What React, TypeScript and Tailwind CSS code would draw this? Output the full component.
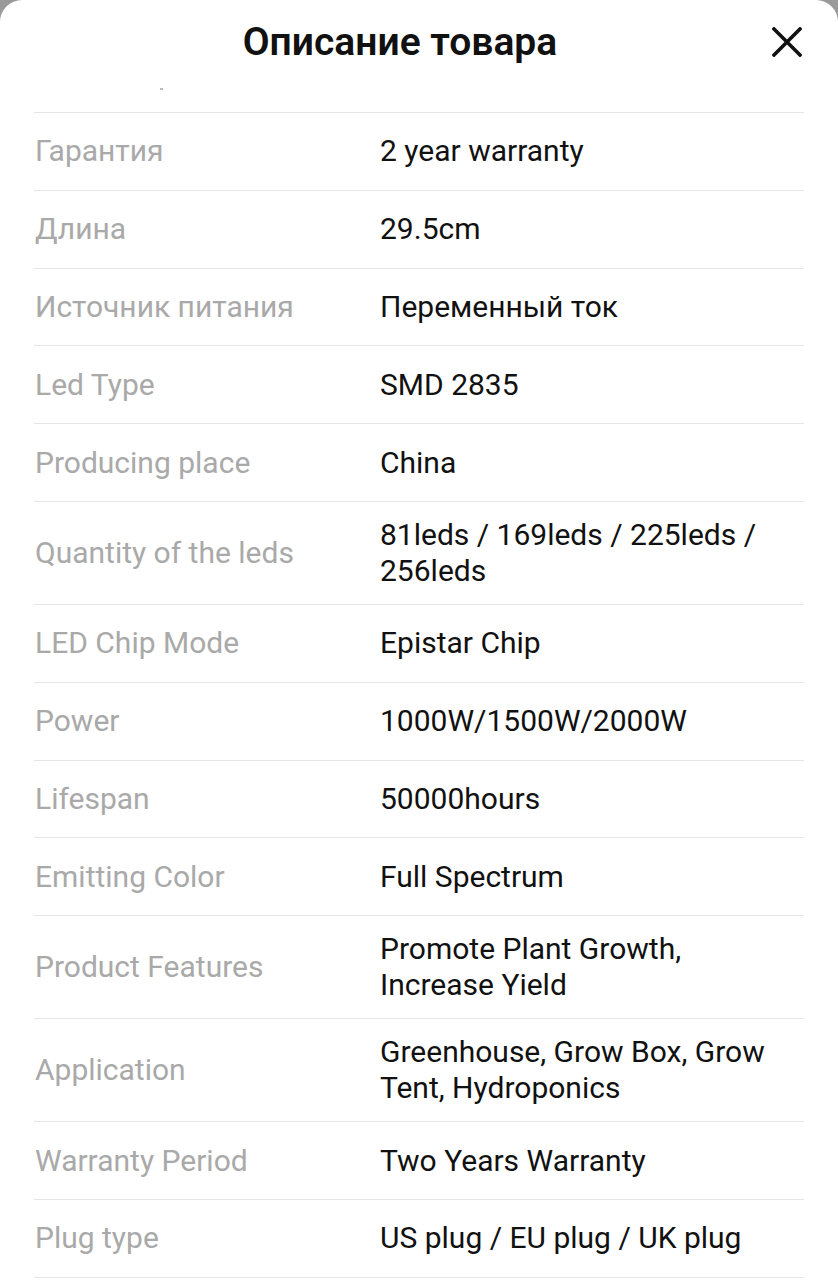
const SPECS: { label: string; value: string }[] = [
  { label: "Гарантия", value: "2 year warranty" },
  { label: "Длина", value: "29.5cm" },
  { label: "Источник питания", value: "Переменный ток" },
  { label: "Led Type", value: "SMD 2835" },
  { label: "Producing place", value: "China" },
  { label: "Quantity of the leds", value: "81leds / 169leds / 225leds / 256leds" },
  { label: "LED Chip Mode", value: "Epistar Chip" },
  { label: "Power", value: "1000W/1500W/2000W" },
  { label: "Lifespan", value: "50000hours" },
  { label: "Emitting Color", value: "Full Spectrum" },
  { label: "Product Features", value: "Promote Plant Growth, Increase Yield" },
  { label: "Application", value: "Greenhouse, Grow Box, Grow Tent, Hydroponics" },
  { label: "Warranty Period", value: "Two Years Warranty" },
  { label: "Plug type", value: "US plug / EU plug / UK plug" },
];

export default function App() {
  return (
    <div className="h-[1280px] overflow-hidden bg-[#9a9a9a] font-['Roboto',sans-serif]">
      <div className="h-full overflow-hidden rounded-t-[22px] bg-white">
        {/* Header */}
        <header className="relative flex h-[84px] items-center justify-center pr-[38px]">
          <h2 className="text-[39px] font-semibold leading-none text-[#111]">
            Описание товара
          </h2>
          <button
            aria-label="Закрыть"
            className="absolute right-[36px] top-[27px] text-[#111]"
          >
            <svg width="30" height="30" viewBox="0 0 30 30" aria-hidden>
              <path
                d="M2 2 L28 28 M28 2 L2 28"
                stroke="currentColor"
                strokeWidth="3.6"
                strokeLinecap="square"
              />
            </svg>
          </button>
        </header>

        {/* Clipped previous row */}
        <div className="mx-[34px] h-[25px] border-b border-[#e6e6e6]">
          <span className="ml-[126px] mt-[4px] block h-[2px] w-[3px] bg-[#bbb]" />
        </div>

        {/* Specs */}
        <ul className="px-[34px]">
          {SPECS.map((s) => (
            <li
              key={s.label}
              className="flex min-h-[77.8px] items-center border-b border-[#e6e6e6] py-[15px] text-[30px] leading-[36px]"
            >
              <span className="w-[346px] shrink-0 pl-[1px] text-[#a9a9a9]">{s.label}</span>
              <span className="flex-1 pr-[20px] text-[#111]">{s.value}</span>
            </li>
          ))}
        </ul>
      </div>
    </div>
  );
}
